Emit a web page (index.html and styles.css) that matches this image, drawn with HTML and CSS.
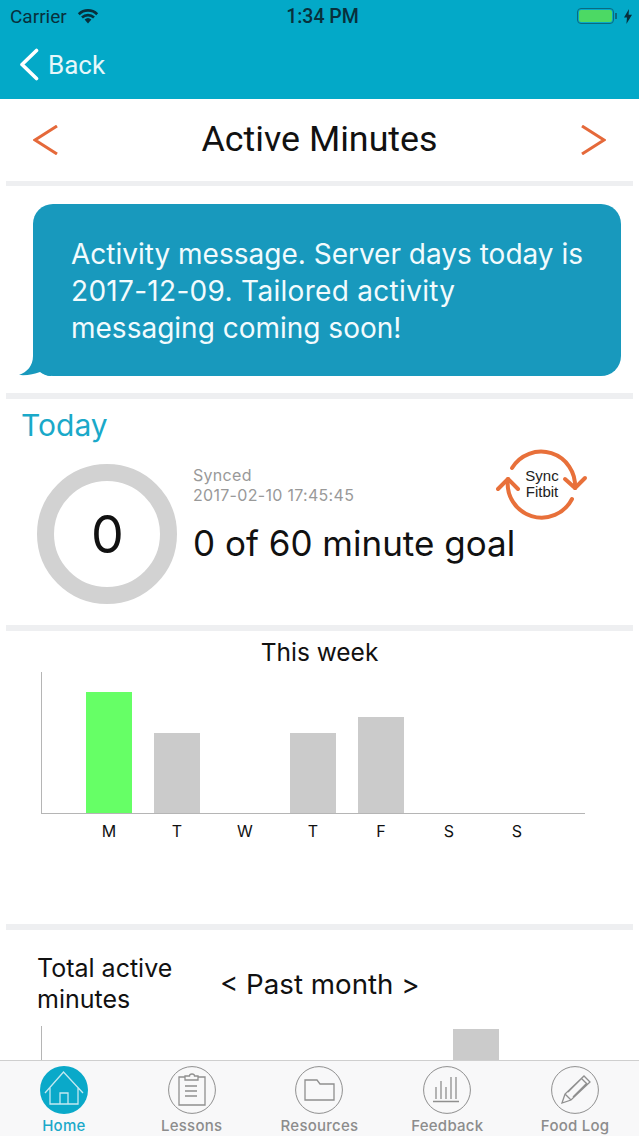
FILE: index.html
```html
<!DOCTYPE html>
<html lang="en">
<head>
    <meta charset="UTF-8">
    <meta name="viewport" content="width=device-width, initial-scale=1.0">
    <title>Active Minutes</title>
    <link rel="stylesheet" href="styles.css">
</head>
<body>
    <div class="app">
        <div class="top-bar">
            <div class="status-bar">
                <div class="status-left">
                    <span>Carrier</span>
                    <svg class="wifi" width="22" height="16" viewBox="0 0 22 16">
                        <path d="M11 15.500 7.600 11.600a5 5 0 0 1 6.800 0z" fill="#08303c"/>
                        <path d="M1.800 6.200a13.200 13.200 0 0 1 18.400 0M5 9.500a9 9 0 0 1 12 0" fill="none" stroke="#08303c" stroke-width="2.700"/>
                    </svg>
                </div>
                <div class="status-time">1:34 PM</div>
                <div class="status-right">
                    <div class="battery"><div class="battery-fill"></div></div>
                    <div class="battery-nub"></div>
                    <svg width="8" height="15" viewBox="0 0 8 15">
                        <path d="M5 0 0 8.500h3L2.400 15 8 5.800H4.600z" fill="#08303c"/>
                    </svg>
                </div>
            </div>
            <div class="nav-bar">
                <svg width="20" height="33" viewBox="0 0 20 33">
                    <path d="M17.500 2.500 3 16.500l14.500 14" fill="none" stroke="#fff" stroke-width="3.600" stroke-linecap="round" stroke-linejoin="round"/>
                </svg>
                <span class="back-label">Back</span>
            </div>
        </div>

        <div class="content">
            <div class="title-row">
                <svg width="25" height="30" viewBox="0 0 25 30">
                    <path d="M24 1 2 15l22 14" fill="none" stroke="#e5693a" stroke-width="3"/>
                </svg>
                <h1 class="page-title">Active Minutes</h1>
                <svg width="25" height="30" viewBox="0 0 25 30">
                    <path d="M1 1l22 14L1 29" fill="none" stroke="#e5693a" stroke-width="3"/>
                </svg>
            </div>
            <div class="divider divider-thin"></div>

            <div class="message-section">
                <div class="bubble">
                    Activity message. Server days today is<br>
                    <span class="bubble-date">2017-12-09. Tailored activity</span><br>
                    messaging coming soon!
                    <svg class="bubble-tail" width="32" height="34" viewBox="0 0 32 34">
                        <path d="M14 0v14C14 24 8 30 0 33c8 .5 15-.5 21-3 3 2 6 4 11 4V0z" fill="#1899bd"/>
                    </svg>
                </div>
            </div>
            <div class="divider"></div>

            <div class="today-section">
                <h2 class="today-title">Today</h2>
                <div class="today-row">
                    <div class="ring">0</div>
                    <div class="today-info">
                        <div class="synced">Synced<br>2017-02-10 17:45:45</div>
                        <div class="goal">0 of 60 minute goal</div>
                    </div>
                    <div class="sync-button">
                        <svg width="92" height="78" viewBox="16 10 92 78">
                            <g fill="none" stroke="#e8703a" stroke-width="4" stroke-linecap="round" stroke-linejoin="round">
                                <path d="M32 34A34 34 0 0 1 95 54"/>
                                <path d="M85 45l10 9 10-10"/>
                                <path d="M92 65A34 34 0 0 1 28 45"/>
                                <path d="M18 55l10-10 10 10"/>
                            </g>
                        </svg>
                        <div class="sync-label">Sync<br>Fitbit</div>
                    </div>
                </div>
            </div>
            <div class="divider"></div>

            <div class="week-section">
                <div class="week-title">This week</div>
                <div class="chart">
                    <div class="bar bar-green bar-121"></div>
                    <div class="bar bar-80"></div>
                    <div class="bar"></div>
                    <div class="bar bar-80"></div>
                    <div class="bar bar-96"></div>
                    <div class="bar"></div>
                    <div class="bar"></div>
                </div>
                <div class="chart-labels">
                    <span>M</span><span>T</span><span>W</span><span>T</span><span>F</span><span>S</span><span>S</span>
                </div>
            </div>
            <div class="divider"></div>

            <div class="month-section">
                <div class="month-head">
                    <div class="month-label">Total active minutes</div>
                    <div class="month-picker">&lt; Past month &gt;</div>
                </div>
                <div class="month-chart">
                    <div class="month-bar"></div>
                </div>
            </div>
        </div>

        <div class="tab-bar">
            <div class="tab tab-active">
                <svg width="48" height="48" viewBox="0 0 48 48">
                    <circle cx="24" cy="24" r="24" fill="#0aa9c9"/>
                    <path d="M5 27 23.500 6 43 27M10 21v17h28V21M20 38V27h8v11" fill="none" stroke="#c4e9f1" stroke-width="1.300"/>
                </svg>
                <span>Home</span>
            </div>
            <div class="tab">
                <svg width="48" height="48" viewBox="0 0 48 48">
                    <g fill="none" stroke="#8f8f8f">
                        <circle cx="24" cy="24" r="23.400" stroke-width="1"/>
                        <path d="M17 11h-6v28h26V11h-7M17 14V10h4.500a2.500 2 0 0 1 5 0H30v4zM17 20h12M17 25h12M17 30h12" stroke-width="1.300"/>
                    </g>
                </svg>
                <span>Lessons</span>
            </div>
            <div class="tab">
                <svg width="48" height="48" viewBox="0 0 48 48">
                    <g fill="none" stroke="#8f8f8f">
                        <circle cx="24" cy="24" r="23.400" stroke-width="1"/>
                        <path d="M10 34V14h12l3 4h14v16z" stroke-width="1.300"/>
                    </g>
                </svg>
                <span>Resources</span>
            </div>
            <div class="tab">
                <svg width="48" height="48" viewBox="0 0 48 48">
                    <g fill="none" stroke="#8f8f8f">
                        <circle cx="24" cy="24" r="23.400" stroke-width="1"/>
                        <path d="M13 33V21M18 33V15M23 33V21M28 33V11M33 33V11M10 35.500h26" stroke-width="1.300"/>
                    </g>
                </svg>
                <span>Feedback</span>
            </div>
            <div class="tab">
                <svg width="48" height="48" viewBox="0 0 48 48">
                    <g fill="none" stroke="#8f8f8f">
                        <circle cx="24" cy="24" r="23.400" stroke-width="1"/>
                        <path d="M11 37l3-9L33 10l6 6-19 18zM14 28l6 6M30.500 12.500l6 6M17 26l15-15M22 31l14-14" stroke-width="1.300"/>
                    </g>
                </svg>
                <span>Food Log</span>
            </div>
        </div>
    </div>
</body>
</html>
```
FILE: styles.css
```css
* {
    margin: 0;
    padding: 0;
    box-sizing: border-box;
}

body {
    font-family: Inter, "Noto Sans", sans-serif;
    background: white;
    color: #111;
}

.app {
    display: flex;
    flex-direction: column;
    height: 1136px;
    overflow: hidden;
}

.top-bar {
    background: #03a9c8;
    height: 99px;
    flex-shrink: 0;
}

.status-bar {
    height: 32px;
    display: grid;
    grid-template-columns: 1fr auto 1fr;
    align-items: center;
    padding: 0 7px 0 10px;
    font-family: Roboto, sans-serif;
    font-size: 19px;
    color: #08303c;
}

.status-left {
    display: flex;
    align-items: center;
    gap: 10px;
}

.status-time {
    font-weight: 500;
    font-size: 19.5px;
    padding-left: 3px;
}

.status-right {
    display: flex;
    align-items: center;
    justify-content: flex-end;
}

.battery {
    width: 37px;
    height: 16px;
    border: 1px solid #0b6a80;
    border-radius: 4px;
    padding: 1px;
}

.battery-fill {
    height: 100%;
    background: #4cd964;
    border-radius: 2px;
}

.battery-nub {
    width: 2px;
    height: 6px;
    background: #0b6a80;
    margin: 0 7px 0 1px;
}

.nav-bar {
    height: 67px;
    display: flex;
    align-items: center;
    padding: 0 0 2px 19px;
    gap: 9px;
}

.back-label {
    font-family: Roboto, sans-serif;
    font-size: 26px;
    color: #e6f7fa;
}

.content {
    flex: 1;
    min-height: 0;
    overflow: hidden;
}

.divider {
    height: 6px;
    margin: 0 6px;
    background: #eeeff1;
}

.divider-thin {
    height: 5px;
}

.title-row {
    height: 82px;
    display: flex;
    align-items: center;
    justify-content: space-between;
    padding: 0 33px 1px;
}

.page-title {
    font-family: Roboto, sans-serif;
    font-size: 35.8px;
    line-height: 40px;
    padding-bottom: 2px;
    font-weight: 400;
    color: #111;
}

.message-section {
    height: 207px;
    padding: 18px 18px 0 33px;
}

.bubble {
    position: relative;
    height: 172px;
    background: #1899bd;
    border-radius: 20px;
    padding: 32px 0 0 38px;
    color: #f2fbfd;
    font-size: 28px;
    line-height: 37px;
}

.bubble-date {
    letter-spacing: 0.3px;
}

.bubble-tail {
    position: absolute;
    left: -14px;
    bottom: 0;
}

.today-section {
    height: 226px;
    padding-left: 21px;
}

.today-title {
    font-size: 30px;
    font-weight: 400;
    line-height: 52px;
    height: 52px;
    color: #1aa9c9;
}

.today-row {
    display: flex;
    padding: 13px 0 0 16px;
}

.ring {
    width: 140px;
    height: 140px;
    border: 17px solid #d2d2d2;
    border-radius: 50%;
    display: flex;
    align-items: center;
    justify-content: center;
    padding-left: 1px;
    font-size: 52px;
    flex-shrink: 0;
}

.today-info {
    padding: 1px 0 0 16px;
    width: 320px;
    flex-shrink: 0;
}

.synced {
    font-size: 16px;
    letter-spacing: 0.3px;
    line-height: 20px;
    color: #999;
    white-space: nowrap;
}

.goal {
    font-size: 35px;
    margin-top: 17px;
    white-space: nowrap;
}

.sync-button {
    position: relative;
    margin: -20px 0 0 -1px;
    width: 92px;
    height: 78px;
}

.sync-label {
    position: absolute;
    left: 0;
    right: 0;
    top: 24px;
    text-align: center;
    font-family: "Liberation Sans", sans-serif;
    font-size: 15px;
    line-height: 16px;
    color: #222;
}

.week-section {
    height: 293px;
}

.week-title {
    font-size: 24.5px;
    line-height: 42px;
    text-align: center;
}

.chart {
    display: flex;
    align-items: flex-end;
    gap: 22px;
    width: 544px;
    height: 142px;
    margin: -1px 0 0 41px;
    padding-left: 44px;
    border-left: 1px solid #b5b5b5;
    border-bottom: 1px solid #b5b5b5;
}

.bar {
    width: 46px;
    background: #cbcbcb;
}

.bar-green {
    background: #66ff66;
}

.bar-121 {
    height: 121px;
}

.bar-96 {
    height: 96px;
}

.bar-80 {
    height: 80px;
}

.chart-labels {
    display: flex;
    gap: 22px;
    margin: 7px 0 0 86px;
    font-size: 16px;
}

.chart-labels span {
    width: 46px;
    text-align: center;
}

.month-section {
    padding-top: 23px;
}

.month-head {
    display: flex;
    align-items: center;
    padding-left: 37px;
    font-size: 25px;
    line-height: 31px;
}

.month-label {
    width: 183px;
}

.month-picker {
    font-size: 27.7px;
}

.month-chart {
    height: 60px;
    margin: 11px 0 0 41px;
    padding: 3px 0 0 411px;
    border-left: 1px solid #b5b5b5;
}

.month-bar {
    width: 46px;
    height: 60px;
    background: #cbcbcb;
}

.tab-bar {
    height: 76px;
    flex-shrink: 0;
    display: grid;
    grid-template-columns: repeat(5, 1fr);
    background: #f8f8f9;
    border-top: 1px solid #cfcfcf;
}

.tab {
    display: flex;
    flex-direction: column;
    align-items: center;
    padding-top: 5px;
    color: #8c8c8c;
    font-size: 15px;
    font-weight: 500;
    letter-spacing: 0.25px;
    line-height: 24px;
    white-space: nowrap;
}

.tab svg {
    display: block;
    flex-shrink: 0;
}

.tab-active {
    color: #1ba9c9;
}
```
